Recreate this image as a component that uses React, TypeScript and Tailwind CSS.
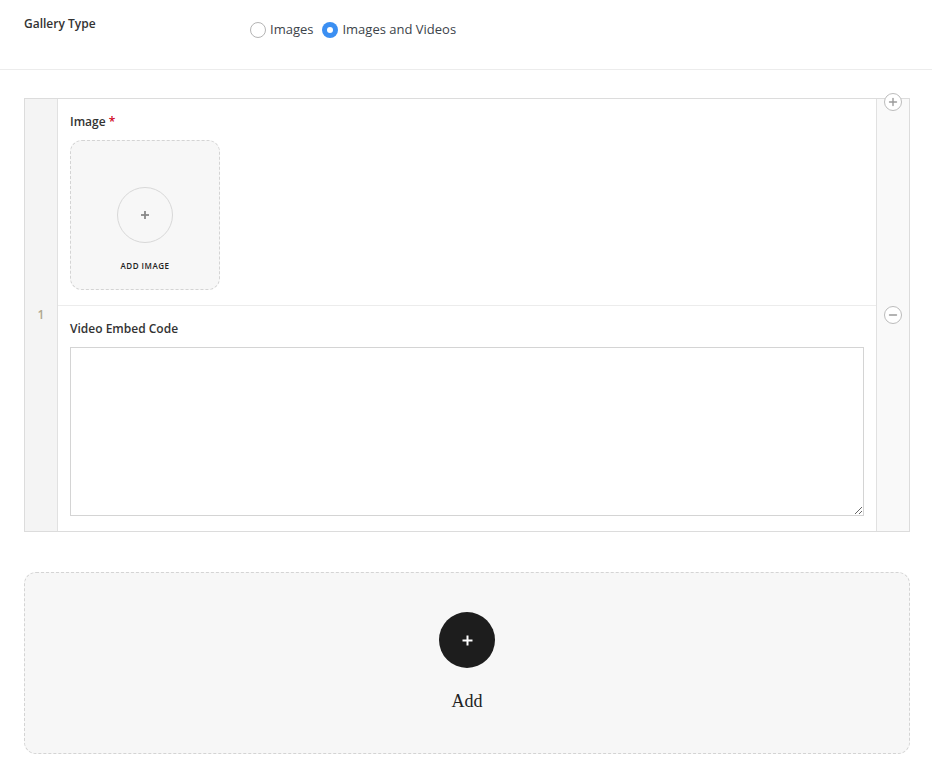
import React from 'react';

const sans = { fontFamily: '"Open Sans", "Noto Sans", sans-serif' };

const Radio = ({ label, checked }: { label: string; checked?: boolean }) => (
    <label className="flex items-center gap-[4px] text-[13px] text-[#3c434a] cursor-pointer">
        {checked ? (
            <span className="w-[16px] h-[16px] rounded-full bg-[#3b8ff2] flex items-center justify-center">
                <span className="w-[6px] h-[6px] rounded-full bg-white" />
            </span>
        ) : (
            <span className="w-[16px] h-[16px] rounded-full border border-[#b4b4b4] bg-white" />
        )}
        <span>{label}</span>
    </label>
);

const CircleBtn = ({ minus }: { minus?: boolean }) => (
    <span className="w-[18px] h-[18px] rounded-full border border-[#bcbcbc] bg-white flex items-center justify-center">
        <svg width="10" height="10" viewBox="0 0 10 10" stroke="#9a9a9a" strokeWidth="1.4" strokeLinecap="round">
            <line x1="1.5" y1="5" x2="8.5" y2="5" />
            {!minus && <line x1="5" y1="1.5" x2="5" y2="8.5" />}
        </svg>
    </span>
);

export default function App() {
    return (
        <div className="min-h-screen bg-white text-[#23282d]" style={sans}>
            {/* gallery type */}
            <div className="flex h-[70px] border-b border-[#ececec] pl-[24px] pt-[15px]">
                <div className="w-[226px] text-[12px] font-semibold text-[#333]">Gallery Type</div>
                <div className="flex gap-[9px] pt-[7px] h-[22px] items-center">
                    <Radio label="Images" />
                    <Radio label="Images and Videos" checked />
                </div>
            </div>

            {/* repeater */}
            <div className="pl-[24px] pt-[28px] pr-[22px]">
                <div className="flex border border-[#dcdcdc]">
                    <div className="w-[33px] bg-[#f4f4f4] border-r border-[#e1e1e1] flex items-center justify-center text-[12px] font-semibold text-[#b0a890]">
                        1
                    </div>
                    <div className="flex-1">
                        <div className="px-[12px] pt-[15px] pb-[15px] border-b border-[#ececec]">
                            <div className="text-[12px] font-semibold text-[#333] leading-[16px] mb-[10px]">
                                Image <span className="text-[#d0021b]">*</span>
                            </div>
                            <div className="w-[150px] h-[150px] rounded-[12px] border border-dashed border-[#d4d4d4] bg-[#f7f7f7] flex flex-col items-center pt-[46px]">
                                <span className="w-[56px] h-[56px] rounded-full border border-[#d8d8d8] flex items-center justify-center">
                                    <svg width="10" height="10" viewBox="0 0 10 10" stroke="#888" strokeWidth="1.8">
                                        <line x1="1" y1="5" x2="9" y2="5" />
                                        <line x1="5" y1="1" x2="5" y2="9" />
                                    </svg>
                                </span>
                                <span className="mt-[17px] text-[8px] font-semibold tracking-[0.5px] text-[#222]">ADD IMAGE</span>
                            </div>
                        </div>
                        <div className="px-[12px] pt-[15px] pb-[15px]">
                            <div className="text-[12px] font-semibold text-[#333] leading-[16px] mb-[10px]">Video Embed Code</div>
                            <textarea className="block w-full h-[169px] border border-[#d4d4d4] bg-white outline-none resize-y" />
                        </div>
                    </div>
                    <div className="w-[33px] bg-[#f9f9f9] border-l border-[#e1e1e1] relative flex items-center justify-center">
                        <span className="absolute -top-[6px] left-1/2 -translate-x-1/2">
                            <CircleBtn />
                        </span>
                        <CircleBtn minus />
                    </div>
                </div>
            </div>

            {/* add */}
            <div className="pl-[24px] pr-[22px] pt-[40px] pb-[20px]">
                <div className="h-[182px] rounded-[12px] border border-dashed border-[#d4d4d4] bg-[#f7f7f7] flex flex-col items-center pt-[39px]">
                    <span className="w-[56px] h-[56px] rounded-full bg-[#1d1d1d] flex items-center justify-center">
                        <svg width="11" height="11" viewBox="0 0 11 11" stroke="#fff" strokeWidth="2">
                            <line x1="0.5" y1="5.5" x2="10.5" y2="5.5" />
                            <line x1="5.5" y1="0.5" x2="5.5" y2="10.5" />
                        </svg>
                    </span>
                    <span className="mt-[20px] text-[18px] text-[#222]" style={{ fontFamily: '"Liberation Serif", serif' }}>
                        Add
                    </span>
                </div>
            </div>
        </div>
    );
}
